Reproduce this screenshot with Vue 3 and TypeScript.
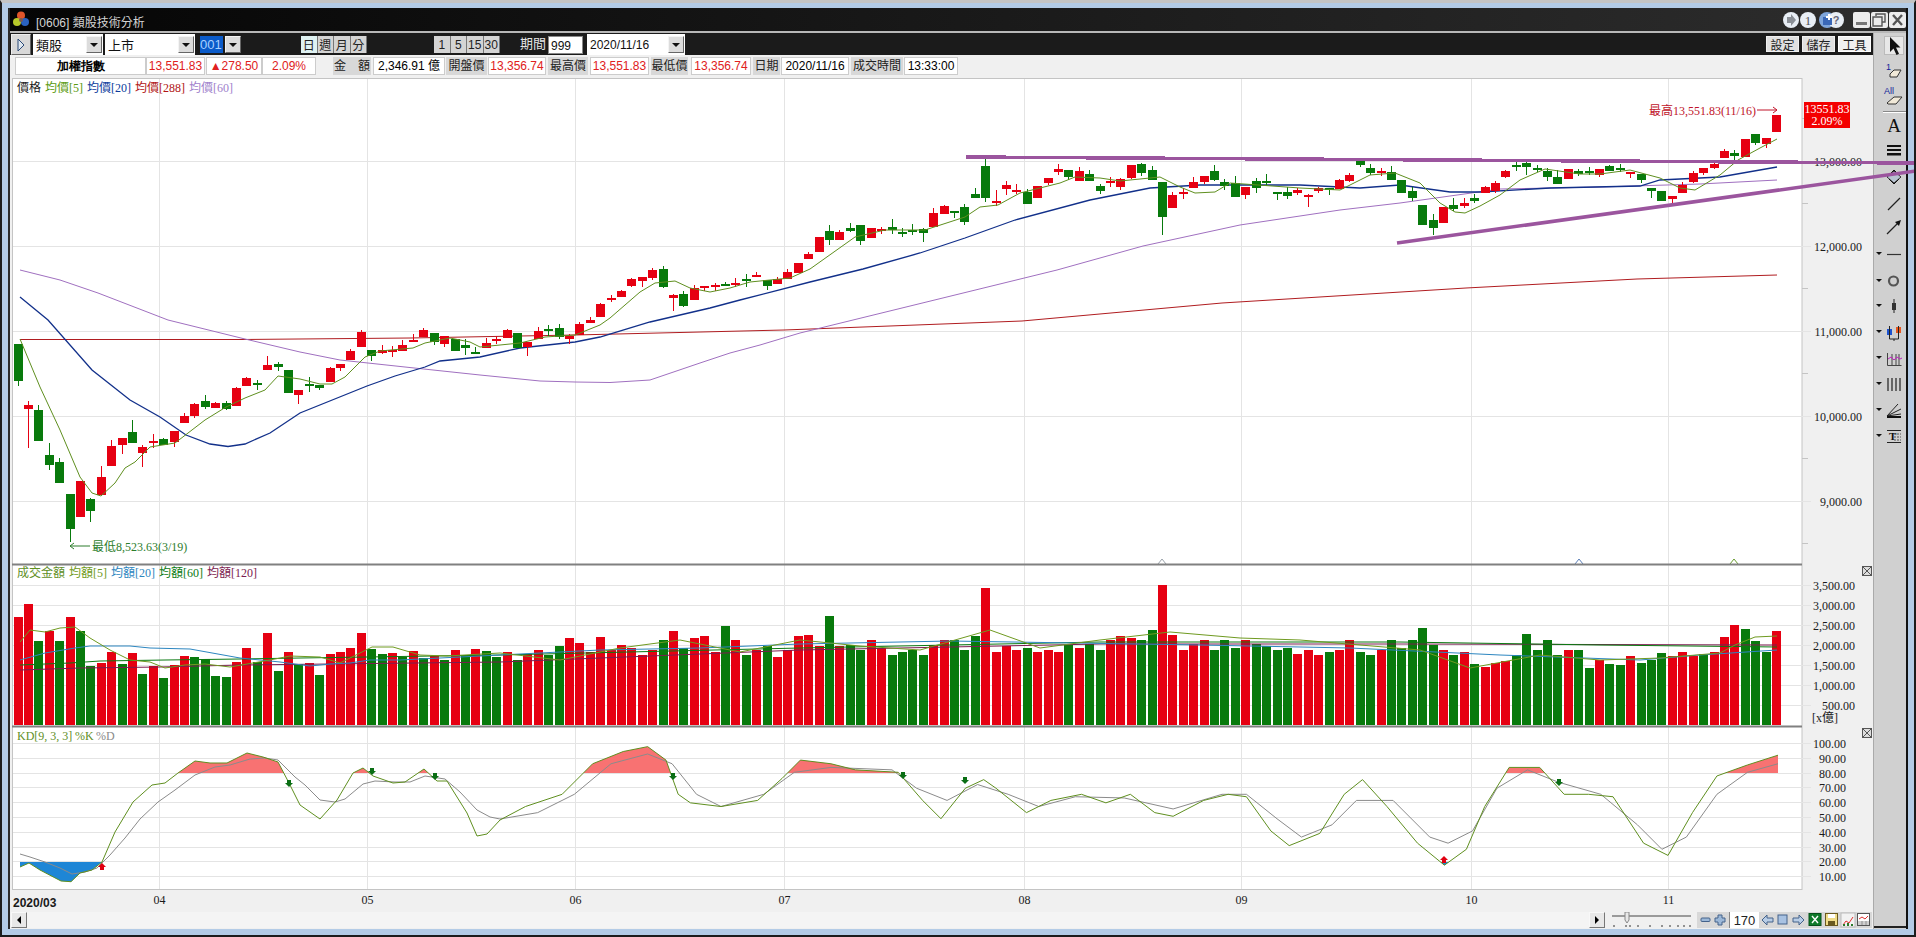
<template>
  <div class="win">
    <div class="frame">
      <div class="title">
        <svg class="logo" width="18" height="16" viewBox="0 0 18 16">
          <circle cx="9" cy="4.5" r="4" fill="#e0552a" />
          <circle cx="5" cy="11" r="4" fill="#b6c82a" />
          <circle cx="13" cy="11" r="4" fill="#2a62c0" />
          <circle cx="9" cy="9" r="2" fill="#7a5a50" />
        </svg>
        <span class="title-text">[0606] 類股技術分析</span>
        <div class="title-icons">
          <svg width="62" height="18" viewBox="0 0 62 18">
            <g v-for="(cx, i) in [8, 25, 44, 61 - 8]" :key="i">
              <circle :cx="cx" cy="9" r="8" :fill="i === 2 ? '#7fa6dc' : '#e8eef5'" />
            </g>
            <path d="M4 6h4V3l5 6-5 6v-3H4z" fill="#8a8f96" />
            <text x="25" y="13.5" class="icon-num">1</text>
            <rect x="40" y="6" width="9" height="8" fill="#3a68b8" />
            <path d="M46 3v6M43 6h6" stroke="#fff" stroke-width="2" />
            <text x="53" y="13" class="icon-q">?</text>
          </svg>
          <div class="wbtns">
            <div class="wbtn"><svg width="17" height="16" viewBox="0 0 17 16"><rect x="3" y="10" width="11" height="3" fill="#777" /></svg></div>
            <div class="wbtn"><svg width="17" height="16" viewBox="0 0 17 16"><path d="M5 4V2h9v8h-3M2 5h9v9H2z" fill="none" stroke="#555" stroke-width="1.4" /></svg></div>
            <div class="wbtn"><svg width="17" height="16" viewBox="0 0 17 16"><path d="M4 3l9 10M13 3L4 13" stroke="#555" stroke-width="2.4" /></svg></div>
          </div>
        </div>
      </div>

      <div class="body">
        <div class="main">
          <div class="toolbar">
            <div class="play"><svg width="10" height="14" viewBox="0 0 10 14"><path d="M2 1l6 6-6 6z" fill="#dfe7ef" stroke="#2b4a78" /></svg></div>
            <div class="combo combo-a"><span>類股</span><i class="drop"></i></div>
            <div class="combo combo-b"><span>上市</span><i class="drop"></i></div>
            <div class="combo combo-c"><b>001</b><i class="drop"></i></div>
            <div class="seg seg-day">
              <span class="on">日</span><span>週</span><span>月</span><span>分</span>
            </div>
            <div class="seg seg-min">
              <span>1</span><span>5</span><span>15</span><span>30</span>
            </div>
            <span class="period">期間</span>
            <div class="field field-n">999</div>
            <div class="combo combo-d"><span>2020/11/16</span><i class="drop"></i></div>
            <div class="tool-btns">
              <span>設定</span><span>儲存</span><span class="on">工具</span>
            </div>
          </div>

          <div class="info">
            <div
              v-for="c in infoCells"
              :key="c.text + c.left"
              class="cell"
              :class="c.kind"
              :style="{ width: c.w + 'px', marginLeft: c.left + 'px' }"
            >{{ c.text }}</div>
          </div>

          <svg class="chart" width="1864" height="830" viewBox="10 78 1864 830">
            <rect x="10" y="78" width="1864" height="830" fill="#f0f0f0" />
            <rect x="12.5" y="78.5" width="1789.5" height="811" fill="#fff" stroke="#c4c4c4" />

            <!-- grid -->
            <g stroke="#e4e4e4" shape-rendering="crispEdges">
              <line v-for="x in months" :key="x" :x1="x" :x2="x" y1="79" y2="889" />
              <line v-for="t in priceAxis" :key="t.label" x1="13" x2="1811" :y1="t.y" :y2="t.y" />
              <line v-for="t in volAxis" :key="t.label" x1="13" x2="1811" :y1="t.y" :y2="t.y" />
              <line v-for="t in kdAxis" :key="t.label" x1="13" x2="1811" :y1="t.y" :y2="t.y" />
            </g>
            <g stroke="#c4c4c4" shape-rendering="crispEdges">
              <line v-for="y in priceMinor" :key="y" x1="1802" x2="1808" :y1="y" :y2="y" />
            </g>

            <!-- price -->
            <polyline class="ln" :points="toPts(ma288)" stroke="#b01c20" />
            <polyline class="ln" :points="toPts(ma60)" stroke="#a070c0" />
            <polyline class="ln ln-b" :points="toPts(ma20)" stroke="#12308a" />
            <g shape-rendering="crispEdges">
              <g v-for="c in candleRects" :key="c.x" :fill="c.fill">
                <rect :x="c.x + 4" :y="c.wt" width="1" :height="c.wb - c.wt" />
                <rect :x="c.x" :y="c.bt" width="9" :height="Math.max(c.bb - c.bt, 2)" />
              </g>
            </g>
            <polyline class="ln" :points="toPts(ma5)" stroke="#5f8f1f" />

            <text x="17" y="92" class="t">價格</text>
            <text x="45" y="92" class="t" fill="#5a9a10">均價[5]</text>
            <text x="87" y="92" class="t" fill="#0b3c9c">均價[20]</text>
            <text x="135" y="92" class="t" fill="#b01414">均價[288]</text>
            <text x="189" y="92" class="t" fill="#a082cc">均價[60]</text>

            <text x="1649" y="115" class="t" fill="#c0142a">最高13,551.83(11/16)</text>
            <path d="M1757 110h20m-4-3l4 3-4 3" fill="none" stroke="#c0142a" />
            <text x="92" y="551" class="t" fill="#2c7d2c">最低8,523.63(3/19)</text>
            <path d="M90 546H70m4-3l-4 3 4 3" fill="none" stroke="#2c7d2c" />

            <rect x="1804" y="102" width="46" height="26" fill="#f40000" />
            <text x="1827" y="113" class="t mid" fill="#fff">13551.83</text>
            <text x="1827" y="125" class="t mid" fill="#fff">2.09%</text>

            <text v-for="t in priceAxis" :key="t.label" x="1862" :y="t.y + 4" class="t end">{{ t.label }}</text>

            <path d="M1158 564l4-5 4 5" fill="none" stroke="#9aa2aa" />
            <path d="M1575 564l4-5 4 5" fill="none" stroke="#5c7fb8" />
            <path d="M1730 564l4-5 4 5" fill="none" stroke="#6a9c30" />

            <!-- volume -->
            <rect x="12" y="563.5" width="1790" height="2" fill="#808080" />
            <g shape-rendering="crispEdges">
              <rect v-for="b in volBars" :key="b.x" :x="b.x" :y="b.top" width="9" :height="725 - b.top" :fill="b.fill" />
            </g>
            <polyline class="ln" :points="toPts(volMa120)" stroke="#7c1c50" />
            <polyline class="ln" :points="toPts(volMa60)" stroke="#0b7a12" />
            <polyline class="ln" :points="toPts(volMa20)" stroke="#2c86c0" />
            <polyline class="ln" :points="toPts(volMa5)" stroke="#6f9a20" />
            <text x="17" y="577" class="t" fill="#5f8f1f">成交金額</text>
            <text x="69" y="577" class="t" fill="#6f9a20">均額[5]</text>
            <text x="111" y="577" class="t" fill="#2c86c0">均額[20]</text>
            <text x="159" y="577" class="t" fill="#0b7a12">均額[60]</text>
            <text x="207" y="577" class="t" fill="#7c1c50">均額[120]</text>
            <text v-for="t in volAxis" :key="t.label" x="1855" :y="t.y + 4" class="t end">{{ t.label }}</text>
            <text x="1812" y="722" class="t">[x億]</text>
            <g v-for="y in [566, 728]" :key="y" fill="#ddd" stroke="#555">
              <rect x="1862.5" :y="y + 0.5" width="9" height="9" />
              <path :d="`M1862.5 ${y + 0.5}l9 9m0-9l-9 9`" fill="none" />
            </g>

            <!-- kd -->
            <rect x="12" y="725.5" width="1790" height="2" fill="#808080" />
            <text x="17" y="740" class="t" fill="#5f8f1f">KD[9, 3, 3]</text>
            <text x="75" y="740" class="t" fill="#5f8f1f">%K</text>
            <text x="96" y="740" class="t" fill="#8a8a8a">%D</text>
            <text v-for="t in kdAxis" :key="t.label" x="1846" :y="t.y + 4" class="t end">{{ t.label }}</text>
            <clipPath id="kd-hi"><rect x="12" y="740" width="1790" height="33" /></clipPath>
            <clipPath id="kd-lo"><rect x="12" y="862" width="1790" height="27" /></clipPath>
            <polygon :points="kdHiPts" fill="#f87272" clip-path="url(#kd-hi)" />
            <polygon :points="kdLoPts" fill="#1e86d6" clip-path="url(#kd-lo)" />
            <polyline class="ln" :points="toPts(kdD)" stroke="#8b8b8b" />
            <polyline class="ln" :points="toPts(kdK)" stroke="#5f8f1f" />
            <path
              v-for="a in kdArrows"
              :key="a.x"
              :d="a.up
                ? `M${a.x} ${a.y - 4}l4 4h-2v3h-4v-3h-2z`
                : `M${a.x} ${a.y + 4}l4-4h-2v-3h-4v3h-2z`"
              :fill="a.up ? '#e00010' : '#0a6e14'"
            />

            <!-- months -->
            <text x="13" y="907" class="t bold">2020/03</text>
            <text v-for="(m, i) in monthNames" :key="m" :x="months[i]" y="904" class="t mid">{{ m }}</text>
          </svg>

          <div class="bottom">
            <div class="sbtn"><svg width="8" height="10" viewBox="0 0 8 10"><path d="M6 1L2 5l4 4z" /></svg></div>
            <div class="track"></div>
            <div class="sbtn"><svg width="8" height="10" viewBox="0 0 8 10"><path d="M2 1l4 4-4 4z" /></svg></div>
            <svg class="slider" width="80" height="16" viewBox="0 0 80 16">
              <rect x="0" y="3" width="79" height="2" fill="#9a9a9a" />
              <path d="M13 0h4v8l-2 3-2-3z" fill="#e8e8e8" stroke="#888" />
              <path d="M2 13v2M14 13v2M18 13v2M26 13v2M38 13v2M50 13v2M58 13v2M66 13v2M72 13v2M78 13v2" stroke="#333" />
            </svg>
            <div class="zoom-group">
              <svg width="32" height="16" viewBox="0 0 32 16">
                <rect x="4" y="6" width="9" height="3.5" rx="1" fill="#9cb8d8" stroke="#44628a" />
                <path d="M21 3h4v3h3v4h-3v3h-4v-3h-3V6h3z" fill="#9cb8d8" stroke="#44628a" />
              </svg>
              <div class="zoom-val">170</div>
              <svg width="112" height="16" viewBox="0 0 112 16">
                <path d="M3 8l5-5v3h6v4H8v3z" fill="#b8cde6" stroke="#44628a" />
                <rect x="19" y="3" width="9" height="9" fill="#a8c2e2" stroke="#44628a" />
                <path d="M45 8l-5-5v3h-6v4h6v3z" fill="#b8cde6" stroke="#44628a" />
                <rect x="50" y="1.5" width="12" height="12" fill="#0f7a2a" stroke="#06501a" />
                <path d="M53 4l6 7m0-7l-6 7" stroke="#fff" stroke-width="1.4" />
                <rect x="66.5" y="1.5" width="12" height="12" fill="#f0dc88" stroke="#6a5a20" />
                <rect x="69" y="2" width="7" height="4" fill="#fff" />
                <rect x="69" y="9" width="7" height="4" fill="#6a5a20" />
                <rect x="82" y="1" width="14" height="14" fill="#f2f2f2" stroke="#bbb" />
                <path d="M84 13l3-4 3 2 4-6" fill="none" stroke="#e03030" />
                <path d="M84 14h2v-2h-2zM88 14h2v-3h-2zM92 14h2v-2h-2z" fill="#2a7a2a" />
                <rect x="98.500" y="1.5" width="12" height="12" fill="#fff" stroke="#555" />
                <path d="M100 7l3-2 3 2 3-3" fill="none" stroke="#e03030" />
                <path d="M99 10h11M99 12h11M103 9v4M107 9v4" stroke="#777" stroke-width=".7" />
              </svg>
            </div>
          </div>
        </div>

        <div class="tools">
          <svg width="32" height="895" viewBox="1874 33 32 895">
            <rect x="1874" y="33" width="32" height="895" fill="#d0d0d0" />
            <rect x="1884.5" y="36.5" width="19" height="18" fill="#e8e8e8" stroke="#bbb" />
            <path d="M1890 37v15l3.500-3.500 3 6.500 2.500-1.200-3-6.200h4.500z" fill="#111" />

            <text x="1886" y="70" class="ic-blue">1</text>
            <path d="M1890 74l4-4h7l-4 7h-7z" fill="#f1e9d8" stroke="#333" />
            <text x="1884" y="94" class="ic-blue">All</text>
            <path d="M1887 103l7-6h8l-6 7h-8z" fill="#f1e9d8" stroke="#333" />
            <path d="M1883 112.500h23" stroke="#fff" />
            <path d="M1883 111.500h23" stroke="#888" />

            <text x="1894" y="132" class="ic-a">A</text>
            <rect x="1887" y="145" width="14" height="2" fill="#111" />
            <rect x="1887" y="149" width="14" height="2" fill="#111" />
            <rect x="1887" y="153" width="14" height="2.500" fill="#111" />
            <path d="M1894 171l7 6-7 6-7-6z" fill="#b8c4d2" stroke="#333" />
            <path d="M1889 175l5-5 5 5M1889 179l5 5 5-5" fill="none" stroke="#111" />
            <path d="M1888 210l12-12" stroke="#222" stroke-width="1.200" />
            <path d="M1887 234l11-11" stroke="#222" stroke-width="1.200" />
            <path d="M1901 220l-6 2 4 4z" fill="#111" />

            <g fill="#111">
              <path v-for="y in caretYs" :key="y" :d="`M1876 ${y - 2}h6l-3 3z`" />
            </g>
            <path d="M1887 254.500h14" stroke="#333" stroke-width="1.200" />
            <circle cx="1893.500" cy="281" r="4.500" fill="none" stroke="#555" stroke-width="2.200" />
            <path d="M1894 299v14" stroke="#222" />
            <rect x="1892" y="303" width="4" height="7" fill="#333" />
            <rect x="1887" y="329" width="5" height="6" fill="#1c52d0" />
            <rect x="1896" y="327" width="5" height="6" fill="#e8561e" />
            <path d="M1889.500 326v13h9v-13M1894 339v2" fill="none" stroke="#222" />
            <path d="M1887.500 353v12.500h14" fill="none" stroke="#444" />
            <path d="M1892 354v11M1896 354v11M1899 354v11" stroke="#444" />
            <path d="M1888 359l3-2 3 3 3-3 3 2 2-1" fill="none" stroke="#c020c0" />
            <path d="M1888 378v13M1892 378v13M1896 378v13M1900 378v13" stroke="#222" stroke-width="1.200" />
            <path d="M1887 416l11-12M1887 416l14-7M1887 416l14-2" stroke="#222" />
            <path d="M1887 417h14" stroke="#111" stroke-width="2" />
            <path d="M1887 430.500h14M1887 442.500h14" stroke="#222" />
            <text x="1889" y="440" class="ic-t">T</text>
            <path d="M1894 434h7M1894 437h7M1894 440h7" stroke="#555" stroke-dasharray="2 1" />
            <path d="M1874 927h32" stroke="#222" stroke-width="2" />
          </svg>
        </div>
      </div>
    </div>

    <svg class="drawn" width="1916" height="937" viewBox="0 0 1916 937">
      <line x1="966" y1="157" x2="1916" y2="163" stroke="#9b559e" stroke-width="3.5" shape-rendering="crispEdges" />
      <line x1="1397" y1="243" x2="1916" y2="171" stroke="#9b559e" stroke-width="3.5" />
    </svg>
  </div>
</template>

<script setup lang="ts">
type Pt = [number, number];
type Candle = [number, number, number, number, number];

const infoCells = [
  { text: '加權指數', w: 131, left: 5, kind: 'white bold' },
  { text: '13,551.83', w: 59, left: 0, kind: 'white red' },
  { text: '▲278.50', w: 56, left: 1, kind: 'white red' },
  { text: '2.09%', w: 54, left: 0, kind: 'white red' },
  { text: '金　額', w: 38, left: 17, kind: 'gray' },
  { text: '2,346.91 億', w: 72, left: 2, kind: 'white' },
  { text: '開盤價', w: 41, left: 1, kind: 'gray' },
  { text: '13,356.74', w: 58, left: 1, kind: 'white red' },
  { text: '最高價', w: 40, left: 2, kind: 'gray' },
  { text: '13,551.83', w: 59, left: 2, kind: 'white red' },
  { text: '最低價', w: 37, left: 2, kind: 'gray' },
  { text: '13,356.74', w: 60, left: 3, kind: 'white red' },
  { text: '日期', w: 27, left: 2, kind: 'gray' },
  { text: '2020/11/16', w: 68, left: 1, kind: 'white' },
  { text: '成交時間', w: 52, left: 2, kind: 'gray' },
  { text: '13:33:00', w: 54, left: 1, kind: 'white' },
];

const months = [159.5, 367.5, 575.5, 784.5, 1024.5, 1241.5, 1471.5, 1668.5];
const monthNames = ['04', '05', '06', '07', '08', '09', '10', '11'];

const money = (n: number) => n.toLocaleString('en-US', { minimumFractionDigits: 2 });

const priceAxis = [13000, 12000, 11000, 10000, 9000].map((p) => ({
  label: money(p),
  y: 161.5 + (13000 - p) * 0.085,
}));
const priceMinor = [118.5, 203.5, 288.5, 373.5, 458.5, 543.5];
const volAxis = [3500, 3000, 2500, 2000, 1500, 1000, 500].map((v) => ({
  label: money(v),
  y: 725.5 - v * 0.04,
}));
const kdAxis = [100, 90, 80, 70, 60, 50, 40, 30, 20, 10].map((k) => ({
  label: money(k),
  y: Math.round(743 + (100 - k) * 1.48) + 0.5,
}));

// [red?, wick top, body top, body bottom, wick bottom] in page pixels
const candles: Candle[] = [
  [0,344,344,381,386],[1,401,405,409,448],[0,405,410,441,441],[0,443,455,465,470],[0,458,462,483,483],
  [0,494,494,529,542],[1,481,481,517,517],[0,498,499,511,522],[1,466,477,495,495],[1,440,446,466,466],
  [1,438,438,445,454],[0,420,432,443,443],[1,445,447,453,467],[1,434,441,443,448],[0,438,439,445,445],
  [1,431,431,442,447],[1,413,416,423,423],[1,403,404,416,418],[0,395,401,407,409],[1,402,403,408,408],
  [0,401,403,409,410],[1,387,388,406,406],[1,377,378,386,386],[0,380,383,385,390],[1,356,365,370,370],
  [0,362,364,367,371],[0,370,370,393,393],[1,390,390,395,404],[0,377,384,386,392],[0,385,385,388,390],
  [1,367,368,382,382],[1,364,364,368,371],[1,349,351,360,360],[1,330,332,347,347],[0,350,350,356,361],
  [1,345,350,353,354],[1,346,350,352,357],[1,340,345,351,351],[1,334,340,342,342],[1,328,330,337,337],
  [0,333,333,342,345],[1,336,336,344,347],[0,339,339,351,351],[0,339,345,348,355],[0,347,352,354,354],
  [1,338,343,348,348],[1,336,339,341,344],[1,329,330,338,338],[0,333,333,348,348],[1,342,342,347,356],
  [1,327,331,339,339],[0,325,329,331,336],[0,324,328,337,339],[1,334,336,339,344],[1,322,324,335,335],
  [1,317,320,323,323],[1,303,304,317,317],[1,295,298,300,302],[1,290,291,297,297],[1,278,279,286,287],
  [1,277,277,281,287],[1,268,270,278,280],[0,266,269,287,288],[1,294,295,298,311],[0,291,294,306,307],
  [1,285,288,300,300],[1,286,286,288,291],[1,283,285,287,291],[0,282,284,286,286],[1,278,283,285,287],
  [0,274,279,281,287],[1,272,275,277,277],[0,280,280,286,290],[1,277,279,284,284],[1,269,272,279,279],
  [1,263,263,273,273],[1,252,254,259,259],[1,237,237,252,252],[0,225,231,240,245],[1,230,232,240,240],
  [0,223,228,231,232],[0,225,225,241,245],[1,228,228,238,238],[1,227,229,231,234],[0,219,227,230,234],
  [0,228,232,234,237],[0,224,230,232,235],[0,228,229,233,242],[1,208,213,227,227],[1,205,206,214,214],
  [0,211,211,213,218],[0,204,207,222,225],[0,188,194,198,198],[0,159,166,198,202],[1,190,201,203,206],
  [1,181,185,189,195],[1,184,190,192,194],[0,189,192,204,204],[1,186,186,198,198],[1,178,178,183,185],
  [1,164,169,172,175],[0,170,170,177,180],[1,167,171,181,181],[0,170,174,181,181],[0,184,186,191,194],
  [1,177,181,183,187],[1,178,179,187,190],[1,165,165,178,179],[0,163,164,173,176],[0,166,170,180,180],
  [0,182,182,217,235],[1,192,195,208,208],[1,188,192,194,199],[1,177,182,188,188],[1,176,176,182,184],
  [0,165,171,180,181],[0,179,182,186,190],[0,176,183,197,197],[1,187,187,195,199],[0,178,181,188,193],
  [0,174,181,183,186],[0,192,192,194,200],[0,187,192,196,199],[1,188,190,193,195],[1,194,195,197,207],
  [1,187,188,191,193],[0,188,188,190,195],[1,179,180,189,189],[1,173,175,181,182],[0,161,161,165,167],
  [0,164,168,173,175],[1,168,171,173,176],[0,166,172,180,180],[0,180,180,193,193],[0,187,191,198,201],
  [0,205,205,225,225],[0,214,220,228,235],[1,207,207,223,223],[0,198,205,209,211],[1,198,203,206,208],
  [0,194,198,201,203],[1,186,187,193,193],[1,181,183,191,193],[1,170,171,177,178],[0,162,165,167,171],
  [0,161,163,167,175],[0,165,168,170,172],[0,168,171,177,181],[0,170,177,184,184],[1,169,169,179,179],
  [0,169,171,174,176],[0,167,171,173,175],[1,169,169,175,177],[0,165,166,171,171],[0,164,168,170,172],
  [1,172,172,174,178],[0,174,174,180,183],[0,188,188,191,198],[0,191,191,201,201],[1,196,196,199,204],
  [1,182,185,193,193],[1,171,173,182,183],[1,168,168,173,175],[1,163,164,168,169],[1,149,151,158,158],
  [0,150,153,156,160],[1,139,139,157,157],[0,134,134,143,145],[1,138,138,144,148],[1,115,115,132,132],
];

const RED = '#e60012';
const GREEN = '#087a0c';
const barX = (i: number) => Math.floor(18.5 + i * 10.405 - 4.5);

const candleRects = candles.map((c, i) => ({
  x: barX(i),
  fill: c[0] ? RED : GREEN,
  wt: c[1],
  bt: c[2],
  bb: c[3],
  wb: c[4],
}));

const volTops = [
  617,604,641,631,641,617,631,666,663,652,664,653,674,666,678,665,656,657,659,676,677,662,648,662,
  633,671,652,664,663,675,654,652,648,633,649,654,653,657,651,658,656,660,650,655,649,651,657,
  652,660,654,650,655,646,638,643,652,637,650,645,648,655,650,640,631,648,638,636,
  652,626,640,655,650,646,657,650,636,635,646,616,646,645,650,640,648,655,652,650,
  655,645,640,640,650,636,588,652,646,650,648,652,650,652,645,648,644,650,640,636,
  638,640,630,585,635,650,644,640,650,640,648,640,644,646,650,648,654,650,655,652,
  650,640,652,655,650,640,648,640,628,645,650,655,652,664,667,663,661,655,634,650,
  640,655,650,650,668,660,664,665,656,663,660,653,656,652,656,654,652,637,625,629,
  641,652,631,
];
const earlyVolRed = 'rrgrgrggrrgrgrgrrggggrrgrgrgrgrrrrggrgrgrgrgrgg';
const volOverride: Record<number, number> = { 93: 1, 110: 1, 162: 0, 165: 1, 166: 0, 167: 0, 168: 0 };

const volBars = volTops.map((top, i) => {
  const red = i < earlyVolRed.length
    ? earlyVolRed[i] === 'r'
    : Boolean(volOverride[i] ?? candles[i][0]);
  return { x: barX(i), top, fill: red ? RED : GREEN };
});

const toPts = (pts: Pt[]) => pts.map((p) => p.join(',')).join(' ');
// points read off the shrunk 1568px reference
const up = (pts: Pt[]): Pt[] => pts.map(([x, y]) => [x * 1.222, y * 1.222]);

const ma288: Pt[] = [[20,339.5],[243,339.5],[410,338],[575,335],[784,330],[1022,321],[1222,303],[1466,288],[1637,279],[1777,275]];
const ma60: Pt[] = [[20,270],[60,280],[98,293],[168,320],[245,339],[300,352],[340,360],[405,367],[480,375],[540,381],[575,382],[610,382.5],[650,380],[700,363],[730,353],[760,345],[800,333],[1057,270],[1143,246],[1240,225],[1340,210],[1400,203],[1500,189],[1600,187],[1700,184],[1777,180]];
const ma20: Pt[] = [[20,297],[48,320],[92,370],[130,400],[160,417],[186,435],[210,444],[228,446.5],[245,444],[270,433],[300,413],[367,386],[395,376],[425,367],[440,361],[480,357],[520,348],[575,342],[600,337],[650,322],[710,308],[740,300],[810,282],[863,269],[920,253],[965,238],[1015,220],[1090,200],[1130,192],[1150,188],[1200,185],[1300,185],[1360,188],[1400,185],[1450,192],[1480,192],[1550,188],[1640,186],[1660,180],[1720,177],[1777,167]];
const ma5: Pt[] = [[20,339],[40,387],[60,430],[80,477],[92,493],[101,496],[115,483],[125,468],[135,462],[150,447],[175,443],[205,420],[226,407],[245,398],[265,390],[278,376],[300,379],[320,384],[332,384],[345,377],[365,357],[380,351],[413,348],[425,343],[450,338],[470,342],[480,347],[500,345],[520,343],[545,337],[575,335],[600,325],[610,318],[640,292],[655,283],[675,281],[690,288],[710,292],[730,288],[750,282],[790,278],[810,269],[855,237],[885,230],[925,230],[965,217],[980,207],[998,205],[1020,193],[1060,183],[1075,177],[1100,178],[1120,181],[1160,177],[1180,187],[1195,193],[1215,192],[1230,183],[1300,188],[1340,190],[1370,175],[1395,173],[1420,183],[1440,203],[1455,212],[1465,213],[1480,206],[1500,195],[1520,180],[1545,169],[1580,174],[1600,174],[1630,170],[1660,178],[1680,188],[1695,190],[1720,175],[1738,160],[1760,148],[1777,139]];

const volMa5: Pt[] = [[20,642],[30,630],[45,632],[60,628],[75,627],[90,638],[110,650],[130,660],[150,662],[165,668],[185,665],[205,664],[230,667],[270,660],[290,656],[320,657],[340,663],[372,647],[393,647],[420,655],[447,656],[500,653],[560,660],[620,648],[680,640],[740,652],[800,640],[860,646],[920,650],[990,630],[1040,648],[1100,640],[1170,632],[1240,638],[1300,640],[1360,645],[1420,650],[1470,668],[1540,655],[1600,660],[1660,658],[1720,653],[1735,645],[1755,637],[1777,636]];
const volMa20: Pt[] = [[20,660],[45,653],[75,648],[90,646],[130,646],[150,648],[190,649],[240,658],[280,662],[310,666],[330,664],[350,663],[370,660],[400,660],[440,658],[500,655],[600,650],[700,648],[800,644],[950,641],[1200,645],[1350,648],[1500,655],[1640,660],[1700,655],[1777,650]];
const volMa60: Pt[] = [[20,665],[70,663],[100,661],[165,660],[240,659],[300,658],[500,655],[800,648],[1100,642],[1400,642],[1600,645],[1777,647]];
const volMa120: Pt[] = [[20,670],[80,668],[160,667],[240,665],[330,664],[500,662],[800,650],[1100,644],[1400,644],[1777,645]];

const kdK: Pt[] = [
  [20,867],[29,863],[40,870],[61,881],[71,881.7],[80,873],[92,870],[102,862],[115,832],[133,802],[152,785],[165,783],[178,773],[195,761],[210,763],[227,763],[247,753],[263,757],[278,762],[289,783],[300,805],[320,819],[337,800],[353,773],[363,768],[373,776],[393,783],[405,782],[424,769],[437,781],[447,781],[467,813],[477,836],[487,834],[500,820],
  ...up([[430,660],[460,650],[485,625],[510,615],[530,611],[545,622],[555,650],[565,657],[590,660],[620,655],[640,637],[655,622],[680,625],[700,630],[735,632],[755,655],[770,670],[790,645],[805,638],[815,645],[840,665],[860,655],[885,650],[905,657],[925,650],[945,665],[960,668],[985,655],[1005,650],[1020,652],[1040,680],[1055,692],[1080,682],[1100,650],[1115,638],[1135,660],[1160,690],[1182,708],[1200,695],[1215,660],[1235,628],[1260,628],[1280,650],[1300,650],[1320,652],[1345,690],[1365,700],[1385,665],[1405,635],[1430,626],[1455,618]]),
];
const kdD: Pt[] = [
  [20,854],[30,857],[45,862],[60,868],[72,874],[85,872],[97,868],[110,855],[125,838],[140,819],[158,802],[175,790],[195,775],[215,767],[230,765],[250,759],[265,758],[278,760],[295,777],[305,785],[320,800],[335,802],[345,799],[363,784],[375,781],[395,782],[410,782],[425,776],[445,779],[460,792],[477,810],[490,817],[500,819],
  ...up([[440,665],[470,650],[500,625],[530,617],[550,625],[570,650],[590,660],[625,650],[650,632],[680,628],[730,630],[750,645],[775,655],[800,642],[825,650],[850,660],[880,652],[920,653],[960,662],[1000,650],[1020,650],[1045,670],[1065,685],[1090,675],[1110,655],[1140,655],[1170,685],[1185,690],[1205,680],[1225,645],[1250,630],[1275,640],[1310,650],[1340,675],[1360,695],[1380,685],[1405,650],[1430,632],[1455,625]]),
];
const lastKx = kdK[kdK.length - 1][0];
const kdHiPts = toPts([[20, 773], ...kdK, [lastKx, 773]]);
const kdLoPts = toPts([[20, 862], ...kdK, [lastKx, 862]]);
const kdArrows = [
  { x: 102, y: 867, up: true },
  { x: 289, y: 783, up: false },
  { x: 372, y: 771, up: false },
  { x: 435, y: 776, up: false },
  { x: 673, y: 776, up: false },
  { x: 903, y: 775, up: false },
  { x: 965, y: 780, up: false },
  { x: 1444, y: 860, up: true },
  { x: 1559, y: 782, up: false },
];

const caretYs = [254, 281, 306, 332, 358, 384, 410, 436];
</script>

<style>
html, body { margin: 0; overflow: hidden; }
</style>

<style scoped>
.win {
  position: relative;
  box-sizing: border-box;
  width: 1916px;
  height: 937px;
  padding: 5px 6px 6px 6px;
  background: #b3cbe6;
  border: 2px solid #1c1c1c;
  border-top: 3px solid #c4c4c4;
  font-family: "Liberation Sans", "Noto Sans CJK TC", sans-serif;
  font-size: 12px;
  overflow: hidden;
}

.frame {
  height: 100%;
  box-sizing: border-box;
  border-left: 2px solid #2a2a2a;
  border-right: 2px solid #111;
  display: flex;
  flex-direction: column;
  background: #f0f0f0;
}

.title {
  flex: none;
  height: 23px;
  display: flex;
  align-items: flex-start;
  color: #d4d4d4;
  background: linear-gradient(90deg, #050505, #2d2d2d);
  border-bottom: 2px solid #b8b8b8;
}

.logo { margin: 3px 0 0 2px; }
.title-text { margin: 9px 0 0 6px; font-size: 12px; line-height: 13px; }

.title-icons {
  margin-left: auto;
  display: flex;
  gap: 8px;
  padding-top: 3px;
}

.wbtns { display: flex; gap: 1px; margin-top: 1px; }
.wbtn {
  width: 17px;
  height: 16px;
  background: #ececec;
  border-radius: 2px;
}
.wbtn svg { display: block; }
.icon-num { font: 13px "Liberation Serif", serif; fill: #555; text-anchor: middle; }
.icon-q { font: bold 11px "Liberation Sans", sans-serif; fill: #667; text-anchor: middle; }

.body { flex: 1; display: flex; min-height: 0; }
.main { width: 1864px; display: flex; flex-direction: column; }

.toolbar {
  flex: none;
  height: 22px;
  display: flex;
  align-items: flex-start;
  padding-left: 1px;
  background: #1b1b1b;
  font-size: 13px;
  box-sizing: border-box;
}

.play {
  width: 18px;
  height: 19px;
  margin-top: 1px;
  display: flex;
  align-items: center;
  justify-content: center;
  background: #d8d8d8;
  border: 1px solid #eee;
  border-right-color: #666;
  border-bottom-color: #666;
}

.combo {
  display: flex;
  align-items: center;
  height: 21px;
  margin-top: 1px;
  background: #fff;
  box-sizing: border-box;
  padding: 0 1px 0 3px;
}
.combo span { flex: 1; color: #111; }
.combo-a { width: 70px; margin-left: 2px; }
.combo-b { width: 90px; margin-left: 2px; }
.combo-c { width: 45px; margin-left: 1px; background: #1b1b1b; padding: 0; }
.combo-c b {
  width: 24px;
  margin: 0 2px 0 4px;
  height: 17px;
  line-height: 18px;
  font-weight: normal;
  color: #a8d0ff;
  background: #0a5ac8;
}
.combo-d { width: 98px; margin-left: 4px; font-size: 12px; }

.drop {
  position: relative;
  flex: none;
  width: 14px;
  height: 15px;
  background: #dcdcdc;
  border: 1px solid #f4f4f4;
  border-right-color: #666;
  border-bottom-color: #666;
}
.drop::after {
  content: "";
  position: absolute;
  left: 3px;
  top: 6px;
  border: 4px solid transparent;
  border-top: 4px solid #111;
  border-bottom: 0;
}

.seg {
  display: flex;
  margin-top: 3px;
  height: 17px;
}
.seg span {
  display: flex;
  align-items: center;
  justify-content: center;
  width: 16.5px;
  background: #d4d4d4;
  color: #222;
  font-size: 12px;
  box-sizing: border-box;
  border-right: 1px solid #777;
}
.seg span.on { background: #dff2f2; }
.seg-day { margin-left: 60px; }
.seg-min { margin-left: 67px; }

.period { margin: 3px 0 0 20px; width: 28px; font-size: 13px; line-height: 15px; color: #e4e4e4; }
.field {
  margin-top: 3px;
  height: 18px;
  line-height: 19px;
  background: #fff;
  color: #111;
  box-sizing: border-box;
  padding-left: 2px;
  border: 1px solid #888;
  font-size: 12px;
}
.field-n { width: 35px; }

.tool-btns {
  margin-left: auto;
  margin-right: 3px;
  margin-top: 3px;
  display: flex;
  gap: 3px;
}
.tool-btns span {
  display: flex;
  align-items: center;
  justify-content: center;
  width: 33px;
  height: 16px;
  color: #222;
  background: #e0e0e0;
  border: 1px solid #f0f0f0;
  box-sizing: border-box;
  font-size: 12px;
}
.tool-btns span.on { background: #f0f0f0; border-color: #fff; }

.info {
  flex: none;
  height: 23px;
  padding-top: 2px;
  box-sizing: border-box;
  display: flex;
  background: #f0f0f0;
}
.cell {
  flex: none;
  height: 18px;
  line-height: 18px;
  text-align: center;
  box-sizing: border-box;
  font-size: 12px;
  white-space: nowrap;
  overflow: hidden;
}
.cell.white { background: #fff; border: 1px solid #ccc; line-height: 16px; }
.cell.gray { background: #d8d8d8; color: #222; }
.cell.red { color: #e02020; }
.cell.bold { font-weight: bold; }

.chart { display: block; flex: none; fill: #1a1a1a; }

.ln { fill: none; stroke-width: 1; }
.ln-b { stroke-width: 1.3; }
.t { font-family: "Liberation Serif", "Noto Sans CJK TC", serif; font-size: 12px; }
.mid { text-anchor: middle; }
.end { text-anchor: end; }
.bold { font-weight: bold; font-family: "Liberation Sans", sans-serif; }

.bottom {
  flex: 1;
  display: flex;
  align-items: flex-start;
  padding: 4px 0 0 1px;
  background: #f0f0f0;
}
.sbtn {
  flex: none;
  width: 16px;
  height: 16px;
  display: flex;
  align-items: center;
  justify-content: center;
  box-sizing: border-box;
  background: #e8e8e8;
  border: 1px solid #f8f8f8;
  border-right-color: #777;
  border-bottom-color: #777;
}
.track {
  width: 1562px;
  height: 16px;
  background: #f4f4f4;
}
.slider { margin-left: 7px; flex: none; }
.zoom-group {
  margin-left: 5px;
  width: 175px;
  height: 16px;
  display: flex;
  background: #d8d8d8;
}
.zoom-val {
  width: 30px;
  height: 16px;
  line-height: 18px;
  background: #fff;
  text-align: center;
  font-size: 13px;
  color: #222;
  box-sizing: border-box;
  border-left: 1px solid #888;
}

.tools { flex: none; width: 32px; background: #d0d0d0; border-left: 1px solid #aaa; margin-left: -1px; }
.tools svg { display: block; }
.ic-blue { font: 9px "Liberation Sans", sans-serif; fill: #12229a; }
.ic-a { font: 19px "Liberation Serif", serif; fill: #111; text-anchor: middle; }
.ic-t { font: bold 11px "Liberation Serif", serif; fill: #111; }

.drawn { position: absolute; left: -2px; top: -3px; pointer-events: none; }
</style>
